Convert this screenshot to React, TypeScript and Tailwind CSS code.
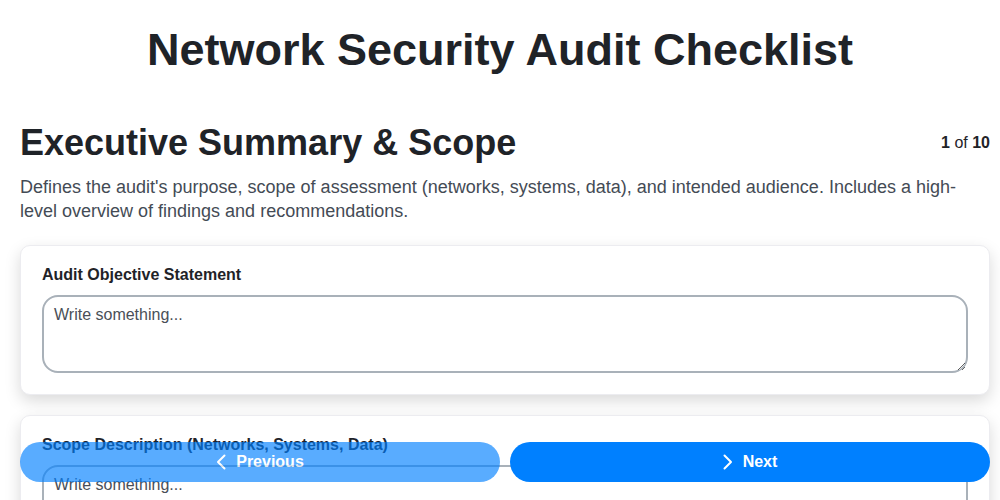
import React from "react";

const ChevronLeft = () => (
  <svg width="10" height="16" viewBox="0 0 10 16" fill="none" stroke="currentColor" strokeWidth="2" strokeLinecap="round" strokeLinejoin="round">
    <path d="M8.5 1.5L2 8l6.5 6.5" />
  </svg>
);
const ChevronRight = () => (
  <svg width="10" height="16" viewBox="0 0 10 16" fill="none" stroke="currentColor" strokeWidth="2" strokeLinecap="round" strokeLinejoin="round">
    <path d="M1.5 1.5L8 8l-6.5 6.5" />
  </svg>
);

function Field({ label }: { label: string }) {
  return (
    <div className="bg-white rounded-[10px] border border-[#ececf0] shadow-[0_6px_16px_rgba(0,0,0,0.15)] px-[21px] pt-[19px] pb-[21px]">
      <div className="text-[16px] font-bold text-[#1f2328] leading-[20px] mb-[10px]">{label}</div>
      <textarea
        placeholder="Write something..."
        className="block w-full h-[78px] rounded-[16px] border-2 border-[#a9b1b9] px-[10px] py-[7px] text-[16px] leading-[22px] text-[#333] placeholder:text-[#4a4f57] outline-none resize-y"
      />
    </div>
  );
}

export default function App() {
  return (
    <div className="min-h-[500px] bg-white pb-[100px]" style={{ fontFamily: '"Liberation Sans", Arial, sans-serif' }}>
      <h1 className="text-center font-bold text-[#1f2328] text-[45px] leading-[50px] pt-[25px]">
        Network Security Audit Checklist
      </h1>
      <div className="pl-[20px] pr-[10px]">
        <div className="flex items-start justify-between mt-[48px]">
          <h2 className="text-[36px] leading-[40px] font-bold text-[#1f2328]">Executive Summary &amp; Scope</h2>
          <div className="text-[16px] text-[#1f2328] mt-[8px]">
            <span className="font-bold">1</span> of <span className="font-bold">10</span>
          </div>
        </div>
        <p className="text-[18px] leading-[24px] text-[#444b55] mt-[12px]">
          Defines the audit's purpose, scope of assessment (networks, systems, data), and intended audience. Includes a high-level overview of findings and recommendations.
        </p>
        <div className="flex flex-col gap-[20px] mt-[22px]">
          <Field label="Audit Objective Statement" />
          <Field label="Scope Description (Networks, Systems, Data)" />
          <Field label="Intended Audience" />
        </div>
      </div>
      <div className="fixed left-[20px] right-[10px] bottom-[18px] flex gap-[10px]">
        <button className="flex-1 h-[40px] rounded-full bg-[#0080ff] opacity-65 text-white font-bold text-[16px] flex items-center justify-center gap-[10px]">
          <ChevronLeft /> Previous
        </button>
        <button className="flex-1 h-[40px] rounded-full bg-[#0080ff] text-white font-bold text-[16px] flex items-center justify-center gap-[10px]">
          <ChevronRight /> Next
        </button>
      </div>
    </div>
  );
}
